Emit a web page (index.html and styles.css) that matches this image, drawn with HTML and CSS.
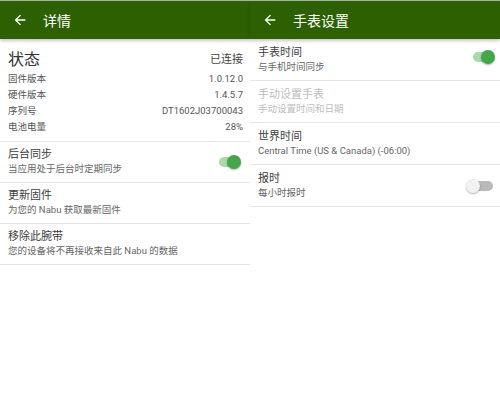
FILE: index.html
```html
<!DOCTYPE html>
<html lang="zh-CN">
<head>
    <meta charset="UTF-8">
    <meta name="viewport" content="width=device-width, initial-scale=1.0">
    <title>详情 / 手表设置</title>
    <link rel="stylesheet" href="styles.css">
</head>
<body>
    <div class="screens">
        <section class="panel panel-details">
            <header class="appbar">
                <svg class="back" viewBox="0 0 24 24"><path d="M20 11H7.83l5.59-5.59L12 4l-8 8 8 8 1.41-1.41L7.83 13H20v-2z"/></svg>
                <h1>详情</h1>
            </header>
            <div class="status">
                <div class="status-head">
                    <span class="status-title">状态</span>
                    <span class="status-value">已连接</span>
                </div>
                <div class="status-row"><span>固件版本</span><span>1.0.12.0</span></div>
                <div class="status-row"><span>硬件版本</span><span>1.4.5.7</span></div>
                <div class="status-row"><span>序列号</span><span>DT1602J03700043</span></div>
                <div class="status-row"><span>电池电量</span><span>28%</span></div>
            </div>
            <div class="item">
                <div class="item-text">
                    <div class="item-title">后台同步</div>
                    <div class="item-sub">当应用处于后台时定期同步</div>
                </div>
                <span class="switch on"></span>
            </div>
            <div class="item">
                <div class="item-text">
                    <div class="item-title">更新固件</div>
                    <div class="item-sub">为您的 Nabu 获取最新固件</div>
                </div>
            </div>
            <div class="item">
                <div class="item-text">
                    <div class="item-title">移除此腕带</div>
                    <div class="item-sub">您的设备将不再接收来自此 Nabu 的数据</div>
                </div>
            </div>
        </section>

        <section class="panel panel-watch">
            <header class="appbar">
                <svg class="back" viewBox="0 0 24 24"><path d="M20 11H7.83l5.59-5.59L12 4l-8 8 8 8 1.41-1.41L7.83 13H20v-2z"/></svg>
                <h1>手表设置</h1>
            </header>
            <div class="item">
                <div class="item-text">
                    <div class="item-title">手表时间</div>
                    <div class="item-sub">与手机时间同步</div>
                </div>
                <span class="switch on raised"></span>
            </div>
            <div class="item disabled">
                <div class="item-text">
                    <div class="item-title">手动设置手表</div>
                    <div class="item-sub">手动设置时间和日期</div>
                </div>
            </div>
            <div class="item">
                <div class="item-text">
                    <div class="item-title">世界时间</div>
                    <div class="item-sub">Central Time (US &amp; Canada) (-06:00)</div>
                </div>
            </div>
            <div class="item">
                <div class="item-text">
                    <div class="item-title">报时</div>
                    <div class="item-sub">每小时报时</div>
                </div>
                <span class="switch"></span>
            </div>
        </section>
    </div>
</body>
</html>
```

FILE: styles.css
```css
body {
    margin: 0;
    background-color: #fff;
    font-family: Roboto, "Noto Sans CJK SC", sans-serif;
    color: #3d3d3d;
}
.screens {
    display: flex;
    width: 500px;
    height: 394px;
}
.panel {
    width: 250px;
    flex-shrink: 0;
}
.appbar {
    position: relative;
    z-index: 1;
    display: flex;
    align-items: center;
    height: 38px;
    border-top: 1px solid #a9b1a3;
    background-color: #2c6000;
    box-shadow: 0 2px 3px rgba(0, 0, 0, 0.22);
}
.appbar .back {
    width: 16px;
    height: 16px;
    margin-left: 12px;
    fill: #fff;
}
.appbar h1 {
    margin: 0 0 0 15px;
    font-size: 14px;
    font-weight: normal;
    color: #fff;
}
.status {
    padding: 8px 7px 6px 8px;
    border-bottom: 1px solid #e6e6e6;
}
.status-head {
    display: flex;
    justify-content: space-between;
    align-items: center;
    height: 22px;
    margin-bottom: 2px;
}
.status-title {
    font-size: 16px;
    color: #333;
}
.status-value {
    font-size: 11px;
    color: #444;
}
.status-row {
    display: flex;
    justify-content: space-between;
    line-height: 16px;
    font-size: 9.5px;
    color: #555;
}
.item {
    display: flex;
    align-items: center;
    padding: 6px 9px 6px 8px;
    border-bottom: 1px solid #e6e6e6;
}
.panel-watch .item {
    padding: 7px 5px 6px 8px;
}
.item-text {
    flex: 1;
}
.item-title {
    line-height: 14px;
    font-size: 11px;
    color: #3d3d3d;
}
.item-sub {
    line-height: 14px;
    font-size: 9.5px;
    color: #666;
}
.item.disabled .item-title,
.item.disabled .item-sub {
    color: #bdbdbd;
}
.switch {
    position: relative;
    width: 29px;
    height: 14px;
}
.switch::before {
    content: "";
    position: absolute;
    left: 7px;
    right: 2px;
    top: 2px;
    height: 10px;
    border-radius: 5px;
    background-color: #b9b9b9;
}
.switch::after {
    content: "";
    position: absolute;
    left: 0;
    top: 0;
    width: 14px;
    height: 14px;
    border-radius: 50%;
    background-color: #f1f1f1;
    box-shadow: 0 1px 2px rgba(0, 0, 0, 0.3);
}
.switch.on::before {
    background-color: #a9d9ab;
}
.switch.on::after {
    left: auto;
    right: 0;
    background-color: #43a648;
}
.switch.raised {
    margin-top: -6px;
}
```
